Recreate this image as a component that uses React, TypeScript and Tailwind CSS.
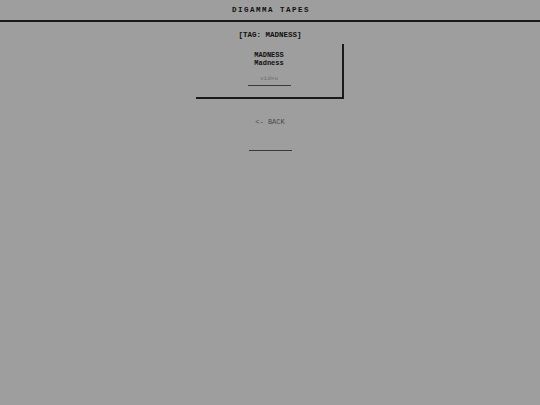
import React from 'react'

const posts = [
  { title: 'MADNESS', subtitle: 'Madness', kind: 'video' },
]

export default function App() {
  return (
    <div className="min-h-[405px] w-full bg-[#9e9e9e] text-[#111] font-['Liberation_Mono',monospace]">
      <header className="h-[22px] border-b-[2px] border-[#1a1a1a] flex items-center justify-center pt-[2px]">
        <h1 className="text-[7.5px] font-bold tracking-[1.5px] pl-[2px]">DIGAMMA TAPES</h1>
      </header>
      <main className="flex flex-col items-center">
        <h2 className="mt-[8px] text-[7.5px] font-bold leading-[10px]">[TAG: MADNESS]</h2>
        {posts.map((post, i) => (
          <div
            key={i}
            className="mt-[4px] w-[148px] h-[55px] border-r-[2px] border-b-[2px] border-[#1a1a1a] flex flex-col items-center pt-[8px]"
          >
            <div className="text-[7px] font-bold leading-[7px]">{post.title}</div>
            <div className="text-[7px] font-bold leading-[7px] mt-[1px]">{post.subtitle}</div>
            <div className="mt-[9px] text-[6px] leading-[6px] text-[#707070]">{post.kind}</div>
            <div className="mt-[3px] w-[43px] h-[1px] bg-[#3a3a3a]" />
          </div>
        ))}
        <a className="mt-[19px] text-[7px] leading-[8px] text-[#4a4a4a]">&lt;- BACK</a>
        <div className="mt-[24px] w-[43px] h-[1px] bg-[#3a3a3a]" />
      </main>
    </div>
  )
}
